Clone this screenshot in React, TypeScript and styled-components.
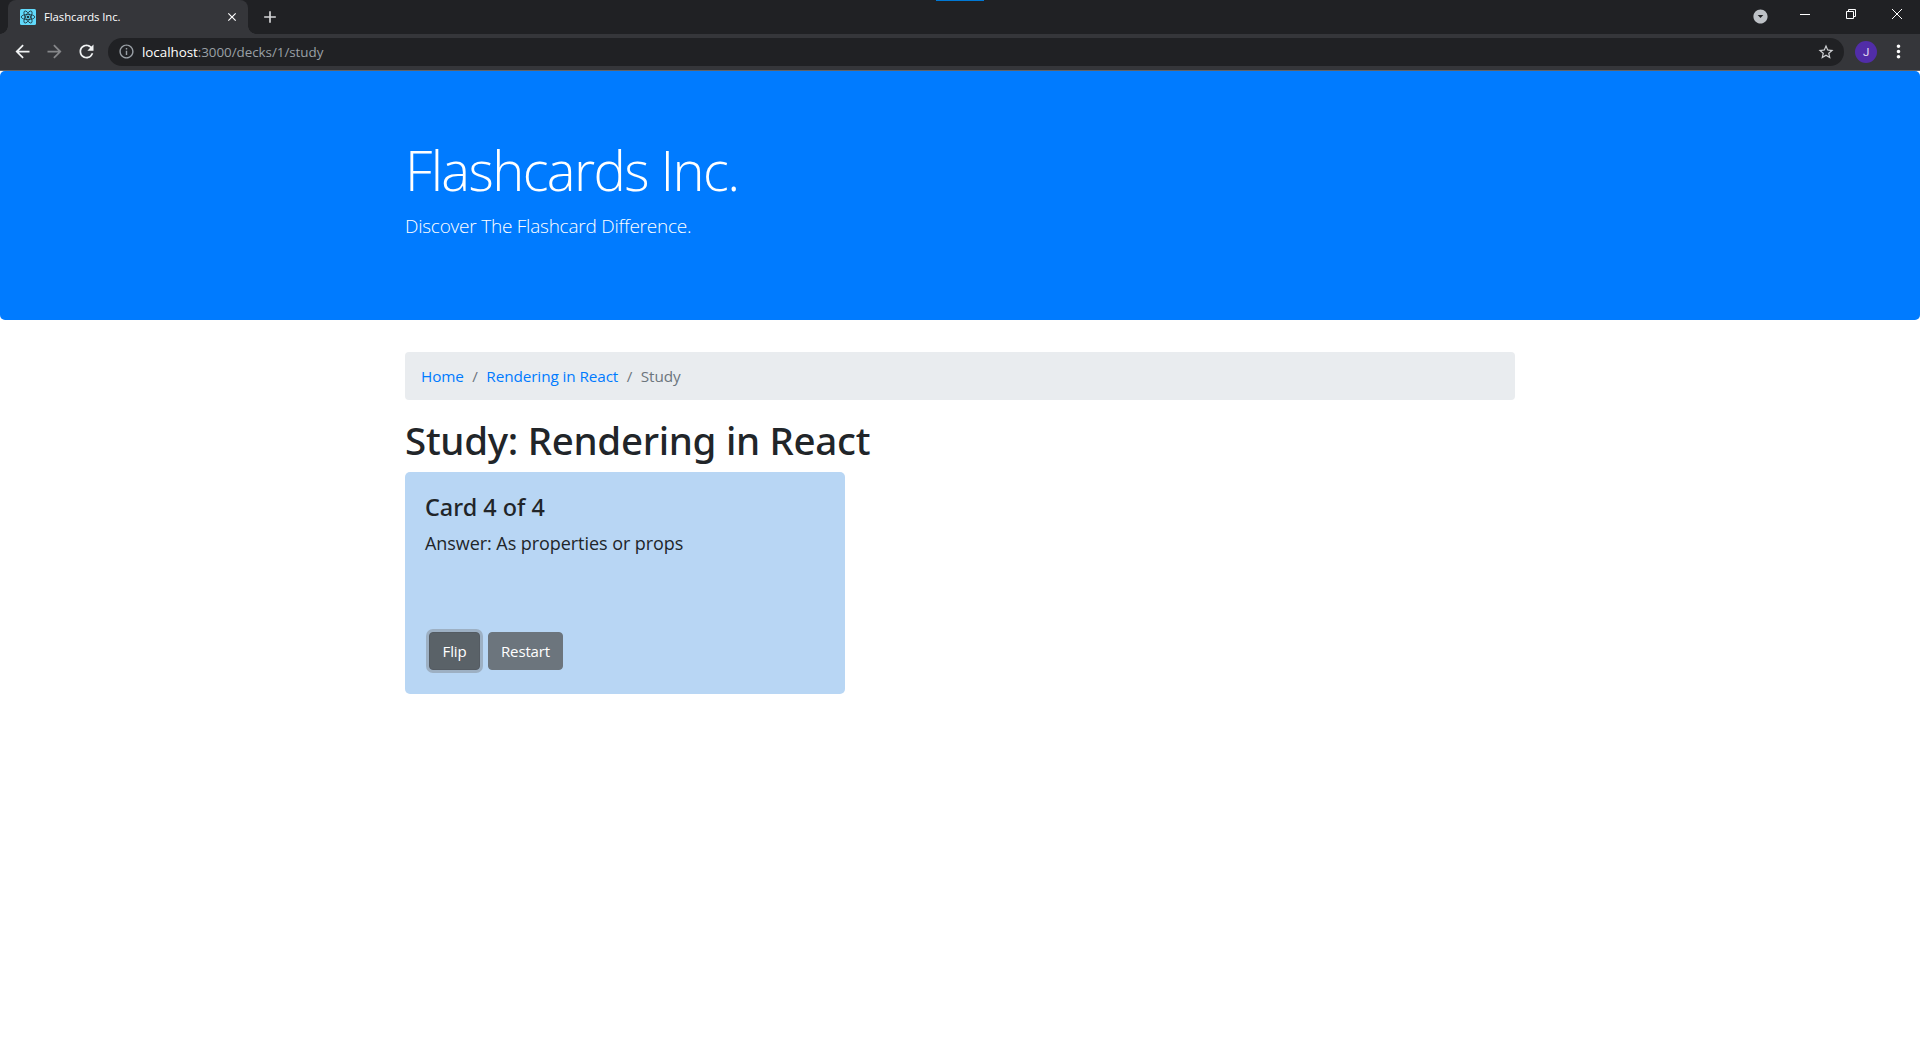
import React from "react";
import styled, { createGlobalStyle } from "styled-components";
import {
  MdAdd,
  MdArrowBack,
  MdArrowDropDownCircle,
  MdArrowForward,
  MdClose,
  MdInfoOutline,
  MdMoreVert,
  MdRefresh,
  MdStarBorder,
} from "react-icons/md";

const GlobalStyle = createGlobalStyle`
  *, *::before, *::after { box-sizing: border-box; }
  body {
    margin: 0;
    background: #fff;
    color: #212529;
    font-family: "Open Sans", "Noto Sans", sans-serif;
    font-size: 15.3px;
    letter-spacing: -0.1px;
    line-height: 24px;
  }
  h1, h2, h3, p, ol { margin: 0; padding: 0; }
  svg { display: block; flex: none; }
`;

const Window = styled.div`
  display: flex;
  flex-direction: column;
  height: 1040px;
  overflow: hidden;
`;

const TitleBar = styled.div`
  position: relative;
  display: flex;
  height: 34px;
  padding-left: 8px;
  background: #202124;
`;

const DragMarker = styled.div`
  position: absolute;
  top: 0;
  left: 936px;
  width: 48px;
  height: 1px;
  background: #0078d4;
`;

const Tab = styled.div`
  position: relative;
  display: flex;
  align-items: center;
  width: 240px;
  padding: 0 9px 0 12px;
  border-radius: 8px 8px 0 0;
  background: #35363a;
  color: #fff;
  &::before,
  &::after {
    content: "";
    position: absolute;
    bottom: 0;
    width: 8px;
    height: 8px;
  }
  &::before {
    left: -8px;
    background: radial-gradient(circle at 0 0, #202124 7.5px, #35363a 8px);
  }
  &::after {
    right: -8px;
    background: radial-gradient(circle at 100% 0, #202124 7.5px, #35363a 8px);
  }
`;

const TabTitle = styled.span`
  flex: 1;
  padding-left: 8px;
  font-size: 11.3px;
  line-height: 16px;
  letter-spacing: -0.05px;
`;

const NewTab = styled.div`
  display: flex;
  align-items: center;
  margin-left: 12px;
  color: #d4d5d7;
`;

const WindowControls = styled.div`
  display: flex;
  margin-left: auto;
`;

const WindowButton = styled.div<{ $w?: number }>`
  display: flex;
  justify-content: center;
  width: ${(p) => p.$w ?? 46}px;
  padding-top: 9px;
  color: #fff;
`;

const SearchTabs = styled(WindowButton)`
  padding-top: 8px;
  color: #bdc1c6;
`;

const Toolbar = styled.div`
  display: flex;
  align-items: center;
  height: 37px;
  padding: 0 11px 1px 11.5px;
  background: #35363a;
  border-bottom: 1px solid #616265;
`;

const NavIcon = styled.div<{ $dim?: boolean }>`
  width: 32px;
  color: ${(p) => (p.$dim ? "#86878a" : "#f1f3f4")};
`;

const AddressBar = styled.div`
  display: flex;
  align-items: center;
  flex: 1;
  height: 28px;
  margin-left: 0.5px;
  padding: 0 9px 0 9.5px;
  border-radius: 14px;
  background: #202124;
  color: #9aa0a6;
`;

const Url = styled.span`
  flex: 1;
  padding-left: 7.5px;
  font-size: 13.4px;
  line-height: 20px;
  letter-spacing: -0.04px;
`;

const Host = styled.span`
  color: #fff;
`;

const StarIcon = styled.div`
  color: #d0d2d5;
`;

const Avatar = styled.div`
  display: flex;
  align-items: center;
  justify-content: center;
  width: 22px;
  height: 22px;
  margin: 0 11px;
  border-radius: 50%;
  background: #512da8;
  color: #e3dcf3;
  font: 11.5px/22px Roboto, sans-serif;
`;

const MenuIcon = styled.div`
  width: 21px;
`;

const MenuSlot = styled(MenuIcon)`
  color: #fff;
`;

const Page = styled.main`
  flex: 1;
`;

const Container = styled.div`
  width: 1110px;
  margin: 0 auto;
`;

const Jumbotron = styled.header`
  height: 249px;
  margin-bottom: 32px;
  padding: 64px 0;
  border-radius: 5px;
  background: #007bff;
  color: #fff;
`;

const Display = styled.h1`
  margin-bottom: 5px;
  font-size: 54.3px;
  font-weight: 300;
  line-height: 71px;
  letter-spacing: -1.6px;
`;

const Lead = styled.p`
  font-size: 19px;
  font-weight: 300;
  line-height: 30px;
  letter-spacing: -0.23px;
`;

const Breadcrumb = styled.ol`
  display: flex;
  height: 48px;
  margin-bottom: 16px;
  padding: 12px 16px;
  border-radius: 4px;
  background: #e9ecef;
  list-style: none;
`;

const Crumb = styled.li<{ $active?: boolean }>`
  color: ${(p) => (p.$active ? "#6c757d" : "#007bff")};
  &:not(:first-child)::before {
    content: "/";
    padding: 0 8.5px;
    color: #6c757d;
  }
`;

const Heading = styled.h2`
  margin-bottom: 7px;
  font: 500 38.5px/49px "Noto Sans", sans-serif;
  letter-spacing: -0.3px;
`;

const Card = styled.section`
  display: flex;
  flex-direction: column;
  width: 440px;
  height: 222px;
  padding: 20px 20px 24px;
  border-radius: 5px;
  background: #b8d6f4;
`;

const CardTitle = styled.h3`
  margin-bottom: 6px;
  font: 500 23.4px/31px "Noto Sans", sans-serif;
  letter-spacing: 0;
`;

const CardText = styled.p`
  font-size: 18px;
  line-height: 28px;
  letter-spacing: -0.06px;
`;

const Actions = styled.div`
  display: flex;
  gap: 8px;
  margin-top: auto;
  padding-left: 4px;
`;

const Button = styled.button<{ $w: number; $focused?: boolean }>`
  width: ${(p) => p.$w}px;
  height: 38px;
  padding: 0;
  border: 1px solid ${(p) => (p.$focused ? "#545b62" : "#6c757d")};
  border-radius: 4px;
  background: ${(p) => (p.$focused ? "#5a6268" : "#6c757d")};
  box-shadow: ${(p) => (p.$focused ? "0 0 0 3px rgba(130, 138, 145, 0.5)" : "none")};
  color: #fff;
  font: inherit;
  font-size: 15px;
  letter-spacing: -0.15px;
`;

const ReactFavicon = () => (
  <svg width="16" height="16" viewBox="0 0 16 16">
    <rect width="16" height="16" rx="1.5" fill="#61dafb" />
    <g fill="none" stroke="#20343c" strokeWidth="0.8">
      <ellipse cx="8" cy="8" rx="6.8" ry="2.6" />
      <ellipse cx="8" cy="8" rx="6.8" ry="2.6" transform="rotate(60 8 8)" />
      <ellipse cx="8" cy="8" rx="6.8" ry="2.6" transform="rotate(120 8 8)" />
    </g>
    <circle cx="8" cy="8" r="1.3" fill="#20343c" />
  </svg>
);

const Glyph = ({ d }: { d: string }) => (
  <svg width="10" height="10" viewBox="0 0 10 10" fill="none" stroke="currentColor">
    <path d={d} />
  </svg>
);

export default function App() {
  return (
    <Window>
      <GlobalStyle />
      <TitleBar>
        <Tab>
          <ReactFavicon />
          <TabTitle>Flashcards Inc.</TabTitle>
          <MdClose size={14} />
        </Tab>
        <NewTab>
          <MdAdd size={20} />
        </NewTab>
        <WindowControls>
          <SearchTabs $w={43}>
            <MdArrowDropDownCircle size={17} />
          </SearchTabs>
          <WindowButton>
            <Glyph d="M0 5.5H10" />
          </WindowButton>
          <WindowButton>
            <Glyph d="M.5 2.5H7.5V9.5H.5ZM2.5 2.5V.5H9.5V7.5H7.5" />
          </WindowButton>
          <WindowButton>
            <Glyph d="M0 0L10 10M10 0L0 10" />
          </WindowButton>
        </WindowControls>
        <DragMarker />
      </TitleBar>
      <Toolbar>
        <NavIcon>
          <MdArrowBack size={21} />
        </NavIcon>
        <NavIcon $dim>
          <MdArrowForward size={21} />
        </NavIcon>
        <NavIcon>
          <MdRefresh size={21} />
        </NavIcon>
        <AddressBar>
          <MdInfoOutline size={17} />
          <Url>
            <Host>localhost</Host>:3000/decks/1/study
          </Url>
          <StarIcon>
            <MdStarBorder size={18} />
          </StarIcon>
        </AddressBar>
        <Avatar>J</Avatar>
        <MenuSlot>
          <MdMoreVert size={21} />
        </MenuSlot>
      </Toolbar>
      <Page>
        <Jumbotron>
          <Container>
            <Display>Flashcards Inc.</Display>
            <Lead>Discover The Flashcard Difference.</Lead>
          </Container>
        </Jumbotron>
        <Container>
          <Breadcrumb>
            <Crumb>Home</Crumb>
            <Crumb>Rendering in React</Crumb>
            <Crumb $active>Study</Crumb>
          </Breadcrumb>
          <Heading>Study: Rendering in React</Heading>
          <Card>
            <CardTitle>Card 4 of 4</CardTitle>
            <CardText>Answer: As properties or props</CardText>
            <Actions>
              <Button $w={51} $focused>
                Flip
              </Button>
              <Button $w={75}>Restart</Button>
            </Actions>
          </Card>
        </Container>
      </Page>
    </Window>
  );
}
